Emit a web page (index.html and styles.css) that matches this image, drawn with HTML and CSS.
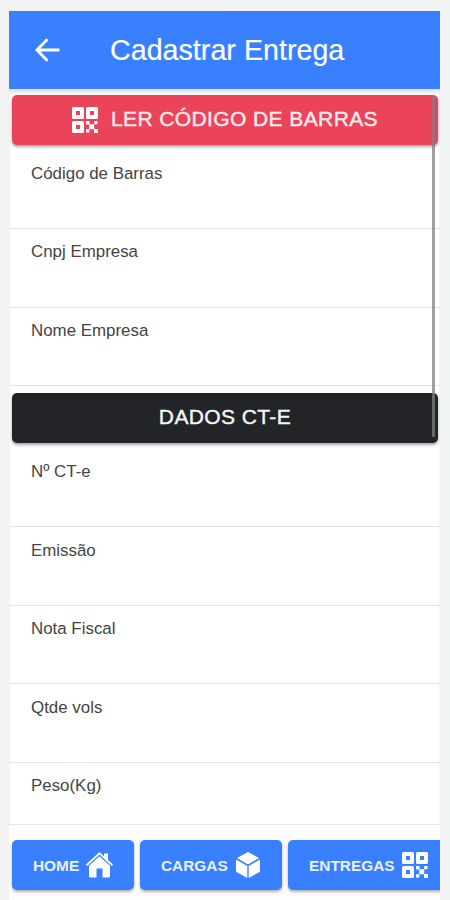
FILE: index.html
```html
<!DOCTYPE html>
<html lang="pt-BR">
<head>
<meta charset="utf-8">
<title>Cadastrar Entrega</title>
<link rel="stylesheet" href="styles.css">
</head>
<body>
<svg class="defs" aria-hidden="true">
  <symbol id="qr" viewBox="0 0 26 26">
    <path fill-rule="evenodd" d="M1.500 0h9a1.500 1.500 0 0 1 1.500 1.500v9a1.500 1.500 0 0 1-1.500 1.500h-9a1.500 1.500 0 0 1-1.500-1.500v-9a1.500 1.500 0 0 1 1.500-1.500zM4 4v4h4v-4zM15.500 0h9a1.500 1.500 0 0 1 1.500 1.500v9a1.500 1.500 0 0 1-1.500 1.500h-9a1.500 1.500 0 0 1-1.500-1.500v-9a1.500 1.500 0 0 1 1.500-1.500zM18 4v4h4v-4zM1.500 14h9a1.500 1.500 0 0 1 1.500 1.500v9a1.500 1.500 0 0 1-1.500 1.500h-9a1.500 1.500 0 0 1-1.500-1.500v-9a1.500 1.500 0 0 1 1.500-1.500zM4 18v4h4v-4z"/>
    <path d="M17.200 17.200h5v5h-5zM14 14h3.500v3.500h-3.500zM22.200 14h3.300v3.300h-3.300zM14 22.200h3.300v3.300h-3.300zM22 22h4v4h-4z"/>
  </symbol>
</svg>
<div class="app">
  <header class="bar">
    <svg class="back" viewBox="0 0 24 24"><path d="M12 1.200 1.500 12 12 22.800M2 12h22"/></svg>
    <h1>Cadastrar Entrega</h1>
  </header>
  <main class="content">
    <button class="btn danger"><svg class="icon"><use href="#qr"/></svg><span>LER CÓDIGO DE BARRAS</span></button>
    <div class="item">Código de Barras</div>
    <div class="item">Cnpj Empresa</div>
    <div class="item">Nome Empresa</div>
    <button class="btn dark"><span>DADOS CT-E</span></button>
    <div class="item">Nº CT-e</div>
    <div class="item">Emissão</div>
    <div class="item">Nota Fiscal</div>
    <div class="item">Qtde vols</div>
    <div class="item">Peso(Kg)</div>
    <i class="scrollbar"></i>
  </main>
  <footer class="tabs">
    <button class="tab home"><span>HOME</span>
      <svg class="icon" viewBox="0 0 27 26"><path d="M13.500 0 18 4.200V1.500h4v6.500l5 4.500-1.200 1.400L13.500 2.600 1.200 13.900 0 12.500z"/><path d="M13.500 4.300 24 13.800V24q0 1.500-1.500 1.500H16.500V16.500h-6v9H4.500Q3 25.500 3 24V13.800z"/></svg>
    </button>
    <button class="tab cargas"><span>CARGAS</span>
      <svg class="icon" viewBox="0 0 26 26"><path d="M13 0 24 6 13 12.600 2 6zM1 7.500 12.300 14v12L2 20.200Q1 19.500 1 18.500zM25 7.500 13.700 14v12L24 20.200q1-.700 1-1.700z"/></svg>
    </button>
    <button class="tab entregas"><span>ENTREGAS</span><svg class="icon"><use href="#qr"/></svg></button>
  </footer>
</div>
</body>
</html>
```
FILE: styles.css
```css
* { box-sizing: border-box; }
body {
  margin: 0;
  height: 900px;
  padding: 11px 10px 0 9px;
  overflow: hidden;
  background: linear-gradient(90deg, #f2f2f2 0 50%, #f1f4f4 50%);
  font-family: "Liberation Sans", Arial, sans-serif;
}
.defs { position: absolute; width: 0; height: 0; }
.app {
  display: flex;
  flex-direction: column;
  height: 889px;
  overflow: hidden;
  background: #fff;
}
.bar {
  flex: none;
  display: flex;
  align-items: center;
  height: 78px;
  padding-left: 26px;
  background: #3880ff;
  color: #fff;
}
.back {
  width: 25px;
  height: 24px;
  fill: none;
  stroke: #fff;
  stroke-width: 2.8;
}
h1 {
  margin: 0 0 0 50px;
  font-size: 28.600px;
  font-weight: 400;
  letter-spacing: .04px;
  line-height: 34px;
  white-space: nowrap;
  -webkit-text-stroke: .2px currentColor;
}
.content {
  position: relative;
  flex: none;
  height: 735px;
  padding-top: 6px;
  overflow: hidden;
  box-shadow: inset 0 4px 4px -1px #ddd;
}
button {
  border: 0;
  padding: 0;
  color: #fff;
  font-family: inherit;
  display: flex;
  align-items: center;
}
.btn {
  width: 426px;
  height: 50px;
  margin-left: 3px;
  justify-content: center;
  gap: 13px;
  border-radius: 5px;
  box-shadow: 0 2px 3px rgba(0, 0, 0, .35);
  font-size: 21px;
  letter-spacing: .4px;
  -webkit-text-stroke: .4px currentColor;
}
.btn span { position: relative; top: -1px; }
.danger { background: #eb445a; color: #ffecef; }
.dark { background: #222428; color: #f4f5f8; margin-top: 7px; }
.icon { flex: none; width: 26px; height: 26px; fill: #fff; }
.item {
  height: 78.600px;
  padding: 13.400px 22px 0;
  border-bottom: 1.500px solid #e2e3e3;
  color: #444;
  font-size: 16.900px;
  line-height: 20px;
}
.btn + .item { height: 84px; padding-top: 18.500px; }
.scrollbar {
  position: absolute;
  top: 7px;
  right: 5px;
  width: 3px;
  height: 341px;
  border-radius: 2px;
  background: rgba(128, 128, 128, .75);
}
.tabs {
  flex: none;
  display: flex;
  gap: 6px;
  height: 76px;
  padding: 15px 0 0 3px;
  border-top: 1px solid #e8e8e8;
  background: #fdfdfd;
}
.tab {
  flex: none;
  height: 50px;
  padding-left: 21px;
  border-radius: 5px;
  background: #3880ff;
  box-shadow: 0 2px 3px rgba(0, 0, 0, .3);
  color: #e8f1ff;
  font-size: 15.400px;
  font-weight: 700;
  gap: 7px;
}
.tab span { position: relative; top: 1px; }
.home { width: 122px; }
.home .icon { width: 27px; }
.cargas { width: 142px; }
.entregas { width: 164px; }
```
